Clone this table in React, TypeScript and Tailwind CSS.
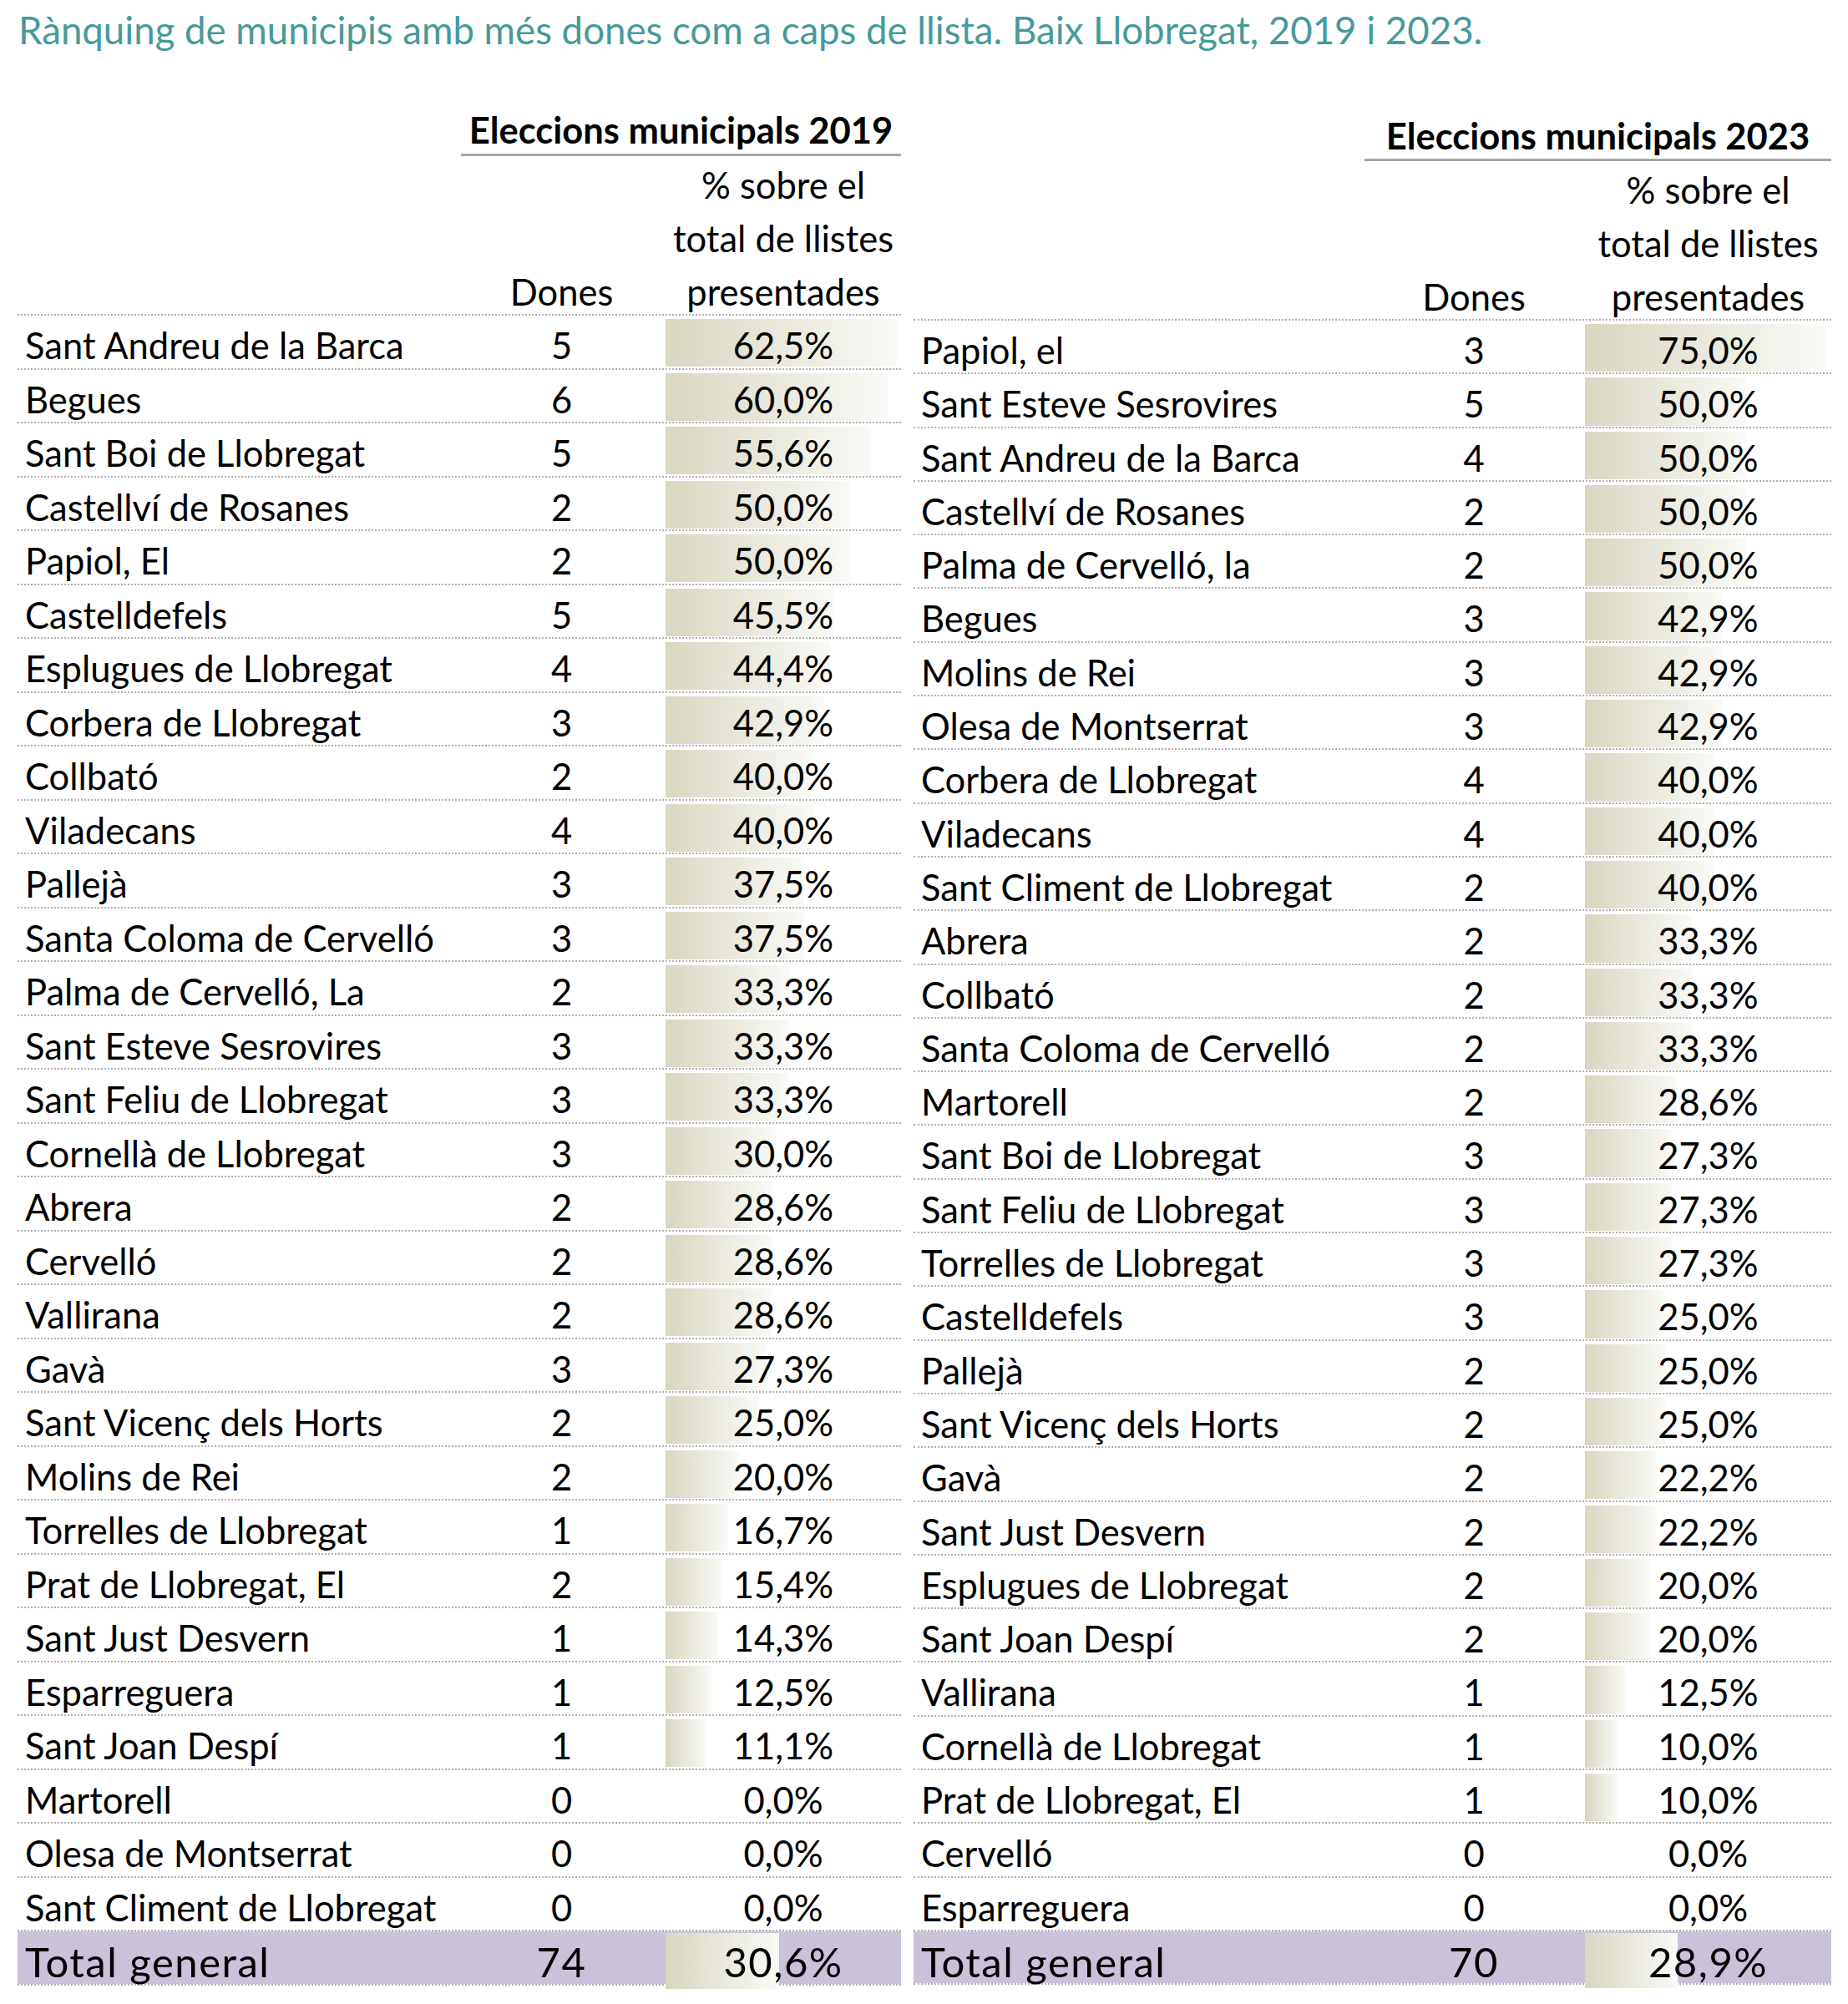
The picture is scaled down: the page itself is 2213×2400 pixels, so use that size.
import React from "react";

type R = { n: string; d: number; p: number };

const D2019: R[] = [
  { n: "Sant Andreu de la Barca", d: 5, p: 62.5 },
  { n: "Begues", d: 6, p: 60.0 },
  { n: "Sant Boi de Llobregat", d: 5, p: 55.6 },
  { n: "Castellví de Rosanes", d: 2, p: 50.0 },
  { n: "Papiol, El", d: 2, p: 50.0 },
  { n: "Castelldefels", d: 5, p: 45.5 },
  { n: "Esplugues de Llobregat", d: 4, p: 44.4 },
  { n: "Corbera de Llobregat", d: 3, p: 42.9 },
  { n: "Collbató", d: 2, p: 40.0 },
  { n: "Viladecans", d: 4, p: 40.0 },
  { n: "Pallejà", d: 3, p: 37.5 },
  { n: "Santa Coloma de Cervelló", d: 3, p: 37.5 },
  { n: "Palma de Cervelló, La", d: 2, p: 33.3 },
  { n: "Sant Esteve Sesrovires", d: 3, p: 33.3 },
  { n: "Sant Feliu de Llobregat", d: 3, p: 33.3 },
  { n: "Cornellà de Llobregat", d: 3, p: 30.0 },
  { n: "Abrera", d: 2, p: 28.6 },
  { n: "Cervelló", d: 2, p: 28.6 },
  { n: "Vallirana", d: 2, p: 28.6 },
  { n: "Gavà", d: 3, p: 27.3 },
  { n: "Sant Vicenç dels Horts", d: 2, p: 25.0 },
  { n: "Molins de Rei", d: 2, p: 20.0 },
  { n: "Torrelles de Llobregat", d: 1, p: 16.7 },
  { n: "Prat de Llobregat, El", d: 2, p: 15.4 },
  { n: "Sant Just Desvern", d: 1, p: 14.3 },
  { n: "Esparreguera", d: 1, p: 12.5 },
  { n: "Sant Joan Despí", d: 1, p: 11.1 },
  { n: "Martorell", d: 0, p: 0 },
  { n: "Olesa de Montserrat", d: 0, p: 0 },
  { n: "Sant Climent de Llobregat", d: 0, p: 0 },
];

const D2023: R[] = [
  { n: "Papiol, el", d: 3, p: 75.0 },
  { n: "Sant Esteve Sesrovires", d: 5, p: 50.0 },
  { n: "Sant Andreu de la Barca", d: 4, p: 50.0 },
  { n: "Castellví de Rosanes", d: 2, p: 50.0 },
  { n: "Palma de Cervelló, la", d: 2, p: 50.0 },
  { n: "Begues", d: 3, p: 42.9 },
  { n: "Molins de Rei", d: 3, p: 42.9 },
  { n: "Olesa de Montserrat", d: 3, p: 42.9 },
  { n: "Corbera de Llobregat", d: 4, p: 40.0 },
  { n: "Viladecans", d: 4, p: 40.0 },
  { n: "Sant Climent de Llobregat", d: 2, p: 40.0 },
  { n: "Abrera", d: 2, p: 33.3 },
  { n: "Collbató", d: 2, p: 33.3 },
  { n: "Santa Coloma de Cervelló", d: 2, p: 33.3 },
  { n: "Martorell", d: 2, p: 28.6 },
  { n: "Sant Boi de Llobregat", d: 3, p: 27.3 },
  { n: "Sant Feliu de Llobregat", d: 3, p: 27.3 },
  { n: "Torrelles de Llobregat", d: 3, p: 27.3 },
  { n: "Castelldefels", d: 3, p: 25.0 },
  { n: "Pallejà", d: 2, p: 25.0 },
  { n: "Sant Vicenç dels Horts", d: 2, p: 25.0 },
  { n: "Gavà", d: 2, p: 22.2 },
  { n: "Sant Just Desvern", d: 2, p: 22.2 },
  { n: "Esplugues de Llobregat", d: 2, p: 20.0 },
  { n: "Sant Joan Despí", d: 2, p: 20.0 },
  { n: "Vallirana", d: 1, p: 12.5 },
  { n: "Cornellà de Llobregat", d: 1, p: 10.0 },
  { n: "Prat de Llobregat, El", d: 1, p: 10.0 },
  { n: "Cervelló", d: 0, p: 0 },
  { n: "Esparreguera", d: 0, p: 0 },
];

const fmt = (p: number) => p.toFixed(1).replace(".", ",") + "%";

type Cfg = {
  wrap: string;
  headPad: string;
  headText: string;
  cols: string;
  rowH: string;
  scale: number;
};

const LEFT: Cfg = {
  wrap: "w-[1058px]",
  headPad: "pl-[531px]",
  headText: "h-[64px] pt-[6px] leading-[58px]",
  cols: "grid-cols-[539px_225px_12px_282px]",
  rowH: "h-[64.5px]",
  scale: 4.43,
};

const RIGHT: Cfg = {
  wrap: "w-[1099px] mt-[6px]",
  headPad: "pl-[540px]",
  headText: "h-[64px] pt-[8px] leading-[56px]",
  cols: "grid-cols-[558px_226px_20px_295px]",
  rowH: "h-[64.3px]",
  scale: 3.853,
};

function HeadLine({ children }: { children: React.ReactNode }) {
  return <div className="h-[64px] pt-[4px] leading-[60px] whitespace-nowrap">{children}</div>;
}

function Row({ r, cfg, total }: { r: R; cfg: Cfg; total?: boolean }) {
  const w = r.p * cfg.scale;
  const pad = total ? "pb-[3px]" : "pt-[3px]";
  return (
    <div
      className={`grid ${cfg.cols} ${cfg.rowH} border-b-2 border-dotted border-[#b0b0b0] bg-clip-padding ${
        total ? "bg-[#cac2d9] text-[49px] tracking-[1.5px]" : ""
      }`}
    >
      <div className={`flex items-center pl-[9px] whitespace-nowrap ${pad}`}>{r.n}</div>
      <div className={`flex items-center justify-center ${pad}`}>{r.d}</div>
      <div />
      <div className={`relative flex items-center justify-center ${pad}`}>
        {w > 0 && (
          <div
            className={`absolute left-0 bg-linear-to-r from-[#d9d6c1] to-[#fafaf7] ${
              total ? "top-[2px] bottom-[8px]" : "top-[4px] bottom-[7px]"
            }`}
            style={{ width: w }}
          />
        )}
        <span className="relative">{fmt(r.p)}</span>
      </div>
    </div>
  );
}

function Table({ title, rows, total, cfg }: { title: string; rows: R[]; total: R; cfg: Cfg }) {
  return (
    <div className={cfg.wrap}>
      <div className={cfg.headPad}>
        <div className="border-b-[3px] border-[#a6a6a6]">
          <div className={`${cfg.headText} text-center font-bold whitespace-nowrap`}>{title}</div>
        </div>
      </div>
      <div className={`grid ${cfg.cols} h-[191px] border-b-2 border-dotted border-[#b0b0b0]`}>
        <div />
        <div className="flex flex-col items-center justify-end">
          <HeadLine>Dones</HeadLine>
        </div>
        <div />
        <div className="flex flex-col items-center justify-end">
          <HeadLine>% sobre el</HeadLine>
          <HeadLine>total de llistes</HeadLine>
          <HeadLine>presentades</HeadLine>
        </div>
      </div>
      {rows.map((r) => (
        <Row key={r.n} r={r} cfg={cfg} />
      ))}
      <Row r={total} cfg={cfg} total />
    </div>
  );
}

export default function App() {
  return (
    <div className="w-[2213px] h-[2400px] bg-white font-[Lato,sans-serif] text-[43.5px] text-black">
      <div className="h-[68px] pt-[4px] pl-[22px] text-[45.6px] leading-[64px] text-[#479a9a] whitespace-nowrap">
        Rànquing de municipis amb més dones com a caps de llista. Baix Llobregat, 2019 i 2023.
      </div>
      <div className="mt-[52px] flex items-start gap-[15px] pl-[21px]">
        <Table title="Eleccions municipals 2019" rows={D2019} total={{ n: "Total general", d: 74, p: 30.6 }} cfg={LEFT} />
        <Table title="Eleccions municipals 2023" rows={D2023} total={{ n: "Total general", d: 70, p: 28.9 }} cfg={RIGHT} />
      </div>
    </div>
  );
}
